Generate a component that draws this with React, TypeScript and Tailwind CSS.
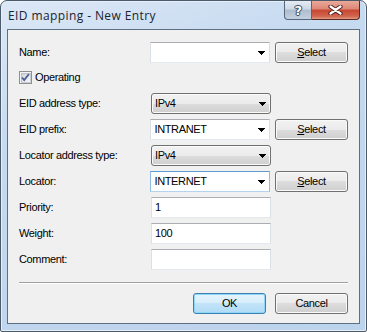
import React from 'react';

const Arrow = () => (
  <svg width="7" height="4" viewBox="0 0 7 4" shapeRendering="crispEdges">
    <path d="M0 0h7v1h-1v1h-1v1h-1v1h-1v-1h-1v-1h-1v-1h-1z" fill="#000" />
  </svg>
);

const Combo = ({ value, focused }: { value?: string; focused?: boolean }) => (
  <div
    className={`w-[120px] h-[21px] bg-white border flex items-center pl-[3px] pr-[4px] ${
      focused
        ? 'border-[#b3d3f1] border-t-[#5f9bd1] border-l-[#8fbbe6] border-r-[#8fbbe6]'
        : 'border-[#e3e9ef] border-t-[#abadb3] border-l-[#dbdfe6] border-r-[#dbdfe6]'
    }`}
  >
    <span className="flex-1 leading-none">{value}</span>
    <Arrow />
  </div>
);

const Dropdown = ({ value }: { value: string }) => (
  <div className="w-[120px] h-[21px] rounded-[3px] border border-[#707070] bg-[linear-gradient(#f2f2f2_0%,#ebebeb_50%,#dddddd_50%,#cfcfcf_100%)] shadow-[inset_0_0_0_1px_#fafafa] flex items-center pl-[3px] pr-[4px]">
    <span className="flex-1 leading-none">{value}</span>
    <Arrow />
  </div>
);

const TextBox = ({ value }: { value?: string }) => (
  <div className="w-[120px] h-[21px] bg-white border border-[#e3e9ef] border-t-[#abadb3] border-l-[#dbdfe6] border-r-[#dbdfe6] flex items-center pl-[3px]">
    <span className="leading-none">{value}</span>
  </div>
);

const Button = ({ children, primary }: { children: React.ReactNode; primary?: boolean }) => (
  <div
    className={`w-[73px] h-[21px] rounded-[3px] border flex items-center justify-center ${
      primary
        ? 'border-[#3c7fb1] bg-[linear-gradient(#e5f4fc_0%,#d6edfb_50%,#c2e4f9_50%,#b0dbf6_100%)] shadow-[inset_0_0_0_1px_#8fd7f7]'
        : 'border-[#707070] bg-[linear-gradient(#f2f2f2_0%,#ebebeb_50%,#dddddd_50%,#cfcfcf_100%)] shadow-[inset_0_0_0_1px_#fafafa]'
    }`}
  >
    {children}
  </div>
);

const SelectButton = () => (
  <Button>
    <span>
      <span className="underline underline-offset-[1px]">S</span>elect
    </span>
  </Button>
);

const Row = ({ label, children }: { label: string; children: React.ReactNode }) => (
  <div className="flex items-center h-[21px]">
    <span className="w-[132px]">{label}</span>
    {children}
  </div>
);

const Checkbox = () => (
  <svg width="13" height="13" viewBox="0 0 13 13" shapeRendering="crispEdges">
    <defs>
      <linearGradient id="cb" x1="0" y1="0" x2="1" y2="1">
        <stop offset="0" stopColor="#cbcfd5" />
        <stop offset="1" stopColor="#f7f7f7" />
      </linearGradient>
    </defs>
    <rect x="0.5" y="0.5" width="12" height="12" fill="#f4f4f4" stroke="#8e8f8f" />
    <rect x="2" y="2" width="9" height="9" fill="url(#cb)" stroke="#aeb3b9" strokeWidth="0.6" />
    <path d="M3 6.5L5.2 9L10 3" fill="none" stroke="#4a5f97" strokeWidth="1.8" shapeRendering="auto" />
  </svg>
);

export default function App() {
  return (
    <div className="w-[367px] h-[332px] bg-white font-['Liberation_Sans',Arial,sans-serif] text-[11px] tracking-[-0.35px] text-black">
      <div className="w-[367px] h-[332px] rounded-t-[7px] rounded-b-[2px] border border-[#4b5b6c] bg-[linear-gradient(160deg,#dce8f6_0%,#c6daf0_30%,#bcd3ec_100%)] shadow-[inset_0_0_0_1px_#e6eef8] flex flex-col px-[6px] pb-[7px]">
        {/* title bar */}
        <div className="h-[28px] flex items-start justify-between">
          <span className="mt-[7px] pl-[1px] text-[12px] leading-[16px] tracking-[0.4px] text-[#1b2431] font-['Open_Sans','Noto_Sans',sans-serif]">
            EID mapping - New Entry
          </span>
          <div className="flex h-[19px]">
            <div className="w-[28px] h-[19px] rounded-bl-[4px] border border-t-0 border-[#56687d] bg-[linear-gradient(#e4ebf3_0%,#cdd8e5_45%,#aebccd_50%,#c2d0df_100%)] flex items-center justify-center">
              <span className="text-white font-bold text-[13px] leading-none font-['DejaVu_Sans',sans-serif] [text-shadow:0_0_1px_#33404f,0_0_1px_#33404f,1px_0_0_#45526a,-1px_0_0_#45526a,0_1px_0_#45526a,0_-1px_0_#45526a]">
                ?
              </span>
            </div>
            <div className="w-[48px] h-[19px] rounded-br-[4px] border border-t-0 border-l-0 border-[#5a2a24] bg-[linear-gradient(#e9a99b_0%,#dd8775_45%,#c7452f_50%,#d2664f_85%,#e39a7f_100%)] flex items-center justify-center">
              <svg width="15" height="10" viewBox="0 0 15 10">
                <path d="M2.5 1.5L12.5 8.5M12.5 1.5L2.5 8.5" stroke="#4a1f19" strokeWidth="4.2" strokeLinecap="round" />
                <path d="M2.5 1.5L12.5 8.5M12.5 1.5L2.5 8.5" stroke="#ffffff" strokeWidth="2.3" strokeLinecap="round" />
              </svg>
            </div>
          </div>
        </div>

        {/* client area */}
        <div className="flex-1 border border-[#5e6f82] bg-[#f0f0f0] flex flex-col px-[11px] pt-[12px]">
          <Row label="Name:">
            <Combo />
            <div className="ml-[5px]">
              <SelectButton />
            </div>
          </Row>

          <div className="flex items-center h-[13px] mt-[8px]">
            <Checkbox />
            <span className="ml-[3px]">Operating</span>
          </div>

          <div className="flex flex-col gap-[5px] mt-[9px]">
            <Row label="EID address type:">
              <Dropdown value="IPv4" />
            </Row>
            <Row label="EID prefix:">
              <Combo value="INTRANET" />
              <div className="ml-[5px]">
                <SelectButton />
              </div>
            </Row>
            <Row label="Locator address type:">
              <Dropdown value="IPv4" />
            </Row>
            <Row label="Locator:">
              <Combo value="INTERNET" focused />
              <div className="ml-[5px]">
                <SelectButton />
              </div>
            </Row>
            <Row label="Priority:">
              <TextBox value="1" />
            </Row>
            <Row label="Weight:">
              <TextBox value="100" />
            </Row>
            <Row label="Comment:">
              <TextBox />
            </Row>
          </div>

          <div className="mt-[12px] h-[2px] border-t border-[#a0a0a0] border-b border-b-white" />

          <div className="flex justify-end gap-[9px] mt-[9px]">
            <Button primary>OK</Button>
            <Button>Cancel</Button>
          </div>
        </div>
      </div>
    </div>
  );
}
